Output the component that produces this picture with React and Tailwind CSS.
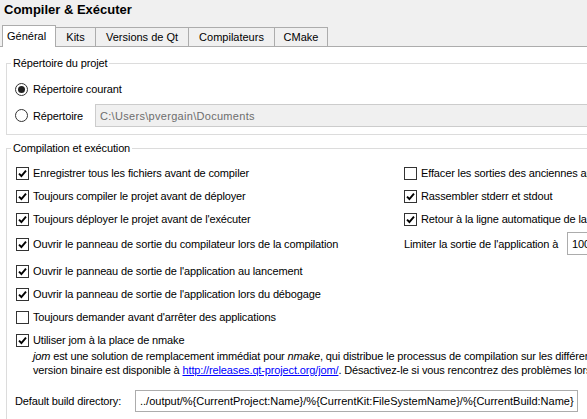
import React from "react";

const Check = ({ checked }) => (
  <span className="w-[13px] h-[13px] border border-[#333333] bg-white flex items-center justify-center shrink-0">
    {checked && (
      <svg width="9" height="9" viewBox="0 0 9 9">
        <path d="M1 4.6 L3.4 7 L8 1.6" stroke="#000" strokeWidth="1.9" fill="none" />
      </svg>
    )}
  </span>
);

const Radio = ({ checked }) => (
  <span className="w-[13px] h-[13px] rounded-full border border-[#333333] bg-white flex items-center justify-center shrink-0">
    {checked && <span className="w-[7px] h-[7px] rounded-full bg-[#222]" />}
  </span>
);

const CheckRow = ({ checked, children, className = "" }) => (
  <div className={`flex items-center gap-[4px] h-[16px] whitespace-nowrap ${className}`}>
    <Check checked={checked} />
    <span>{children}</span>
  </div>
);

const tabs = [
  { label: "Général", w: "w-[54px]", active: true },
  { label: "Kits", w: "w-[40px]" },
  { label: "Versions de Qt", w: "w-[93px]" },
  { label: "Compilateurs", w: "w-[86px]" },
  { label: "CMake", w: "w-[53px]" },
];

export default function App() {
  return (
    <div className="w-[587px] h-[419px] overflow-hidden bg-[#f0f0f0] text-black text-[11px] leading-[16px] font-['Liberation_Sans',Arial,sans-serif]">
      <div className="w-[800px]">
        {/* Title */}
        <div className="h-[25px] pl-[4px] pt-[2px] text-[13px] font-bold">Compiler &amp; Exécuter</div>

        {/* Tabs */}
        <div className="flex items-end h-[21px] pl-[2px] relative z-10">
          {tabs.map((t) =>
            t.active ? (
              <div
                key={t.label}
                className={`${t.w} h-[22px] -mb-[1px] bg-white border-l border-t border-r border-[#acacac] pl-[4px] pt-[2px]`}
              >
                {t.label}
              </div>
            ) : (
              <div
                key={t.label}
                className={`${t.w} h-[19px] bg-[#f0f0f0] border-t border-r border-[#acacac] flex items-center justify-center`}
              >
                {t.label}
              </div>
            )
          )}
        </div>

        {/* Pane */}
        <div className="bg-white border-t border-[#acacac] h-[400px] pt-[8px] pl-[6px] tracking-[-0.14px]">
          <fieldset className="border border-[#dcdcdc] pb-[7px]">
            <legend className="ml-[4px] px-[2px]">Répertoire du projet</legend>
            <div className="pl-[8px] pt-[9px] flex flex-col gap-[6px]">
              <div className="flex items-center gap-[5px] h-[18px]">
                <Radio checked />
                <span>Répertoire courant</span>
              </div>
              <div className="flex items-center h-[23px]">
                <Radio />
                <span className="ml-[5px] w-[62px]">Répertoire</span>
                <div className="flex-1 h-[23px] bg-[#f0f0f0] border border-[#cccccc] pl-[4px] flex items-center text-[#6d6d6d] tracking-[0.3px]">
                  C:\Users\pvergain\Documents
                </div>
              </div>
            </div>
          </fieldset>

          <fieldset className="mt-[5px] border border-[#dcdcdc] h-[300px]">
            <legend className="ml-[4px] px-[2px]">Compilation et exécution</legend>
            <div className="pl-[9px] pt-[9px]">
              <div className="grid grid-cols-[388px_auto] gap-y-[7px]">
                <CheckRow checked>Enregistrer tous les fichiers avant de compiler</CheckRow>
                <CheckRow>Effacer les sorties des anciennes applications</CheckRow>
                <CheckRow checked>Toujours compiler le projet avant de déployer</CheckRow>
                <CheckRow checked>Rassembler stderr et stdout</CheckRow>
                <CheckRow checked>Toujours déployer le projet avant de l'exécuter</CheckRow>
                <CheckRow checked>Retour à la ligne automatique de la sortie</CheckRow>
                <CheckRow checked className="mt-[2px]">
                  Ouvrir le panneau de sortie du compilateur lors de la compilation
                </CheckRow>
                <div className="flex items-center h-[19px] whitespace-nowrap">
                  <span className="w-[163px]">Limiter la sortie de l'application à</span>
                  <div className="h-[23px] w-[80px] border border-[#acacac] pl-[4px] flex items-center">100000</div>
                </div>
              </div>

              <div className="mt-[10px] flex flex-col gap-[7px]">
                <CheckRow checked>Ouvrir le panneau de sortie de l'application au lancement</CheckRow>
                <CheckRow checked>Ouvrir la panneau de sortie de l'application lors du débogage</CheckRow>
                <CheckRow>Toujours demander avant d'arrêter des applications</CheckRow>
                <CheckRow checked>Utiliser jom à la place de nmake</CheckRow>
              </div>
              <div className="pl-[17px] mt-[1px] leading-[14px] whitespace-nowrap">
                <div>
                  <i>jom</i> est une solution de remplacement immédiat pour <i>nmake</i>, qui distribue le processus de
                  compilation sur les différents cœurs du processeur. La dernière
                </div>
                <div>
                  version binaire est disponible à{" "}
                  <span className="text-[#0000ff] underline">http://releases.qt-project.org/jom/</span>. Désactivez-le si
                  vous rencontrez des problèmes lors de la compilation.
                </div>
              </div>

              <div className="mt-[13px] flex items-center h-[22px] whitespace-nowrap">
                <span className="w-[120px] -ml-[1px]">Default build directory:</span>
                <div className="h-[22px] w-[443px] border border-[#acacac] pl-[4px] flex items-center tracking-normal">
                  ../output/%{"{"}CurrentProject:Name{"}"}/%{"{"}CurrentKit:FileSystemName{"}"}/%{"{"}CurrentBuild:Name{"}"}
                </div>
              </div>
            </div>
          </fieldset>
        </div>
      </div>
    </div>
  );
}
